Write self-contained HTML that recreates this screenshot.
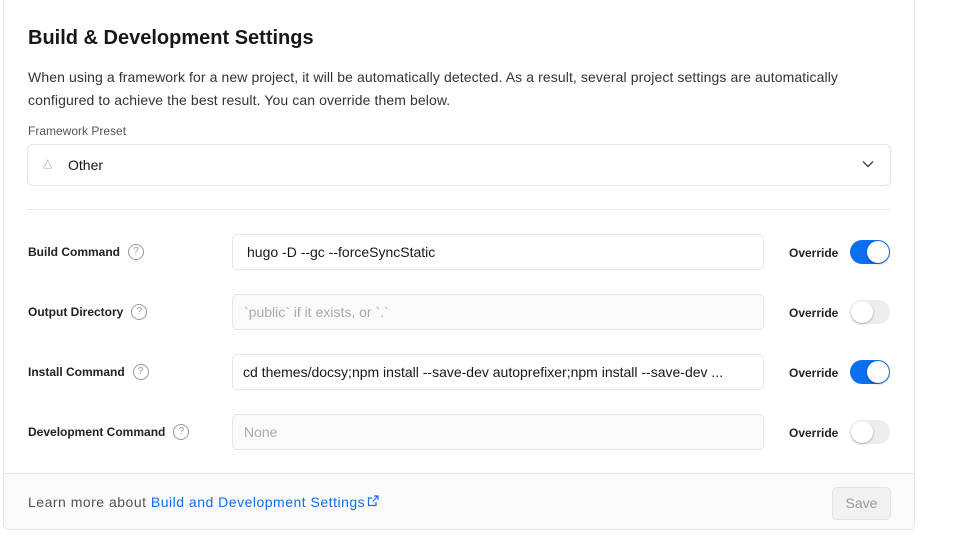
<!DOCTYPE html>
<html><head><style>
*{box-sizing:border-box;margin:0;padding:0}
body{width:974px;height:559px;background:#fff;font-family:"Liberation Sans",sans-serif;color:#171717;position:relative;overflow:hidden}
.card{position:absolute;left:3px;top:-10px;width:912px;height:540px;border:1px solid #e5e5e5;border-radius:6px;overflow:hidden;background:#fff}
.a{position:absolute}
h1{position:absolute;left:24px;top:36px;font-size:20px;font-weight:bold;color:#171717}
.desc{left:24px;top:75px;font-size:14px;line-height:23px;color:#333;width:862px;letter-spacing:0.1px}
.lab{font-size:12px;color:#555}
.sel{left:23px;top:153px;width:864px;height:42px;border:1px solid #e5e5e5;border-radius:6px;font-size:14px}
.hr{left:23px;top:218px;width:864px;height:1px;background:#e8e8e8}
.rl{left:24px;font-size:12px;font-weight:600;color:#222;display:flex;align-items:center}
.q{display:inline-block;width:16px;height:16px;border:1px solid #999;border-radius:50%;font-size:10px;color:#999;text-align:center;line-height:14px;margin-left:8px;font-weight:normal}
.in{left:228px;width:532px;height:36px;border:1px solid #e5e5e5;border-radius:5px;font-size:14px;line-height:34px;padding-left:11px;white-space:nowrap;overflow:hidden}
.dis{background:#fafafa;color:#aaa}
.ov{left:785px;font-size:12px;font-weight:600;color:#222}
.tg{left:846px;width:40px;height:24px;border-radius:12px;background:#ececec}
.tg i{position:absolute;top:1px;left:1px;width:22px;height:22px;border-radius:50%;background:#fff;box-shadow:0 1px 2px rgba(0,0,0,.3)}
.tg.on{background:#0b6ff0}.tg.on i{left:17px}
.foot{left:0;top:482px;width:912px;height:60px;background:#fafafa;border-top:1px solid #e5e5e5}
</style></head><body>
<div class="card">
<h1>Build &amp; Development Settings</h1>
<div class="a desc">When using a framework for a new project, it will be automatically detected. As a result, several project settings are automatically configured to achieve the best result. You can override them below.</div>
<div class="a lab" style="left:24px;top:133px">Framework Preset</div>
<div class="a sel"><span class="a" style="left:15px;top:11px;color:#aaa;font-size:12px">△</span><span class="a" style="left:40px;top:12px">Other</span>
<svg class="a" style="left:834px;top:15px" width="12" height="8" viewBox="0 0 12 8"><path d="M1 1.5l5 5 5-5" fill="none" stroke="#444" stroke-width="1.4"/></svg></div>
<div class="a hr"></div>

<div class="a rl" style="top:253px">Build Command<span class="q">?</span></div>
<div class="a in" style="top:243px;padding-left:14px">hugo -D --gc --forceSyncStatic</div>
<div class="a ov" style="top:255px">Override</div>
<div class="a tg on" style="top:249px"><i></i></div>

<div class="a rl" style="top:313px">Output Directory<span class="q">?</span></div>
<div class="a in dis" style="top:303px">`public` if it exists, or `.`</div>
<div class="a ov" style="top:315px">Override</div>
<div class="a tg" style="top:309px"><i></i></div>

<div class="a rl" style="top:373px">Install Command<span class="q">?</span></div>
<div class="a in" style="top:363px;padding-left:10px">cd themes/docsy;npm install --save-dev autoprefixer;npm install --save-dev ...</div>
<div class="a ov" style="top:375px">Override</div>
<div class="a tg on" style="top:369px"><i></i></div>

<div class="a rl" style="top:433px">Development Command<span class="q">?</span></div>
<div class="a in dis" style="top:423px">None</div>
<div class="a ov" style="top:435px">Override</div>
<div class="a tg" style="top:429px"><i></i></div>

<div class="a foot">
<div class="a" style="left:24px;top:20px;font-size:14px;color:#555;letter-spacing:0.5px">Learn more about <span style="color:#0b6ff0">Build and Development Settings</span><svg width="12" height="12" viewBox="0 0 12 12" style="margin-left:2px"><path d="M7 1h4v4M11 1L5.5 6.5M9 7v3.5H1.5V3H5" fill="none" stroke="#0b6ff0" stroke-width="1.2"/></svg></div>
<div class="a" style="left:828px;top:13px;width:59px;height:33px;border:1px solid #e3e3e3;border-radius:5px;background:#f2f2f2;color:#999;font-size:14px;text-align:center;line-height:31px">Save</div>
</div>
</div>
</body></html>
